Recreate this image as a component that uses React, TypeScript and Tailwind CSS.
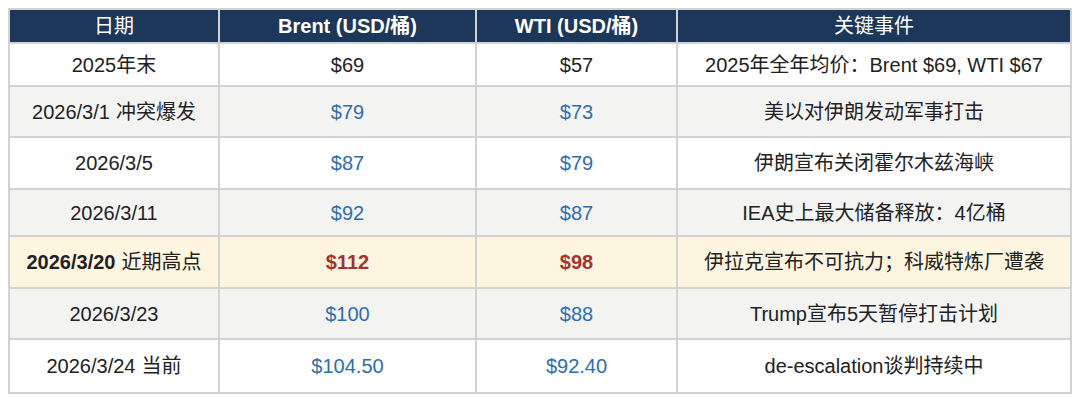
import React from 'react'

type Row = {
  date: string
  note?: string
  brent: string
  wti: string
  event: string
  tone: 'plain' | 'blue' | 'hot'
  bg: string
  h: string
}

const rows: Row[] = [
  { date: '2025年末', brent: '$69', wti: '$57', event: '2025年全年均价：Brent $69, WTI $67', tone: 'plain', bg: 'bg-white', h: 'h-[41px]' },
  { date: '2026/3/1', note: '冲突爆发', brent: '$79', wti: '$73', event: '美以对伊朗发动军事打击', tone: 'blue', bg: 'bg-[#f3f3f2]', h: 'h-[49px]' },
  { date: '2026/3/5', brent: '$87', wti: '$79', event: '伊朗宣布关闭霍尔木兹海峡', tone: 'blue', bg: 'bg-white', h: 'h-[50px]' },
  { date: '2026/3/11', brent: '$92', wti: '$87', event: 'IEA史上最大储备释放：4亿桶', tone: 'blue', bg: 'bg-[#f3f3f2]', h: 'h-[45px]' },
  { date: '2026/3/20', note: '近期高点', brent: '$112', wti: '$98', event: '伊拉克宣布不可抗力；科威特炼厂遭袭', tone: 'hot', bg: 'bg-[#fdf5e0]', h: 'h-[50px]' },
  { date: '2026/3/23', brent: '$100', wti: '$88', event: 'Trump宣布5天暂停打击计划', tone: 'blue', bg: 'bg-[#f3f3f2]', h: 'h-[49px]' },
  { date: '2026/3/24', note: '当前', brent: '$104.50', wti: '$92.40', event: 'de-escalation谈判持续中', tone: 'blue', bg: 'bg-white', h: 'h-[52px]' },
]

const Cell = ({ className = '', children }: { className?: string; children: React.ReactNode }) => (
  <div className={`flex items-center justify-center whitespace-nowrap ${className}`}>{children}</div>
)

export default function App() {
  return (
    <div className="w-[1080px] h-[402px] bg-white pt-[8px] pl-[8px] font-['Liberation_Sans','Noto_Sans_CJK_SC',sans-serif] text-[20px] text-[#222]">
      <div className="inline-grid grid-cols-[208px_255px_199px_392px] gap-[2px] p-[2px] bg-[#d2d2d2]">
        <Cell className="h-[32px] bg-[#1d375b] text-white">日期</Cell>
        <Cell className="h-[32px] bg-[#1d375b] text-white font-bold">Brent (USD/桶)</Cell>
        <Cell className="h-[32px] bg-[#1d375b] text-white font-bold">WTI (USD/桶)</Cell>
        <Cell className="h-[32px] bg-[#1d375b] text-white">关键事件</Cell>

        {rows.map((r) => {
          const price =
            r.tone === 'hot' ? 'text-[#a83030] font-bold' : r.tone === 'blue' ? 'text-[#2f6db3]' : 'text-[#222]'
          return (
            <React.Fragment key={r.date}>
              <Cell className={`${r.h} ${r.bg}`}>
                <span className={r.tone === 'hot' ? 'font-bold' : ''}>{r.date}</span>
                {r.note && <span className="ml-[6px]">{r.note}</span>}
              </Cell>
              <Cell className={`${r.h} ${r.bg} ${price}`}>{r.brent}</Cell>
              <Cell className={`${r.h} ${r.bg} ${price}`}>{r.wti}</Cell>
              <Cell className={`${r.h} ${r.bg}`}>{r.event}</Cell>
            </React.Fragment>
          )
        })}
      </div>
    </div>
  )
}
